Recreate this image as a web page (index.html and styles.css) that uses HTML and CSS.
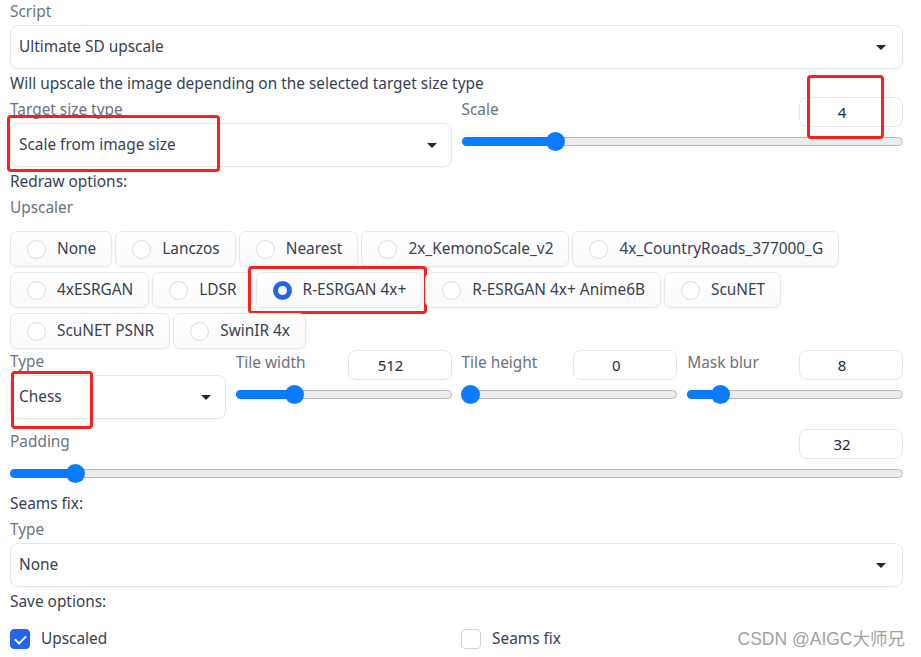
FILE: index.html
```html
<!DOCTYPE html>
<html lang="en">
<head>
    <meta charset="UTF-8">
    <title>Ultimate SD upscale</title>
    <link rel="stylesheet" href="styles.css">
</head>
<body>
    <div class="panel">
        <div class="label label-first">Script</div>
        <div class="dropdown">
            <span>Ultimate SD upscale</span>
            <span class="caret"></span>
        </div>

        <p class="info">Will upscale the image depending on the selected target size type</p>

        <div class="row row-two">
            <div class="col">
                <div class="label">Target size type</div>
                <div class="dropdown dropdown-tight">
                    <span>Scale from image size</span>
                    <span class="caret"></span>
                </div>
                <span class="mark mark-target"></span>
            </div>
            <div class="col">
                <div class="slider-head">
                    <span class="label">Scale</span>
                    <div class="num">4</div>
                </div>
                <div class="slider">
                    <div class="fill" style="width: 21.3%"></div>
                    <div class="thumb" style="left: 21.3%"></div>
                </div>
                <span class="mark mark-scale"></span>
            </div>
        </div>

        <div class="section">Redraw options:</div>
        <div class="label label-gap">Upscaler</div>

        <div class="radios">
            <label class="radio"><span class="dot"></span>None</label>
            <label class="radio"><span class="dot"></span>Lanczos</label>
            <label class="radio"><span class="dot"></span>Nearest</label>
            <label class="radio"><span class="dot"></span>2x_KemonoScale_v2</label>
            <label class="radio"><span class="dot"></span>4x_CountryRoads_377000_G</label>
            <label class="radio"><span class="dot"></span>4xESRGAN</label>
            <label class="radio"><span class="dot"></span>LDSR</label>
            <label class="radio checked"><span class="dot"></span>R-ESRGAN 4x+<span class="mark mark-radio"></span></label>
            <label class="radio"><span class="dot"></span>R-ESRGAN 4x+ Anime6B</label>
            <label class="radio"><span class="dot"></span>ScuNET</label>
            <label class="radio"><span class="dot"></span>ScuNET PSNR</label>
            <label class="radio"><span class="dot"></span>SwinIR 4x</label>
        </div>

        <div class="row row-four">
            <div class="col">
                <div class="label label-type">Type</div>
                <div class="dropdown dropdown-tight">
                    <span>Chess</span>
                    <span class="caret"></span>
                </div>
                <span class="mark mark-type"></span>
            </div>
            <div class="col">
                <div class="slider-head">
                    <span class="label">Tile width</span>
                    <div class="num">512</div>
                </div>
                <div class="slider">
                    <div class="fill" style="width: 27.1%"></div>
                    <div class="thumb" style="left: 27.1%"></div>
                </div>
            </div>
            <div class="col">
                <div class="slider-head">
                    <span class="label">Tile height</span>
                    <div class="num">0</div>
                </div>
                <div class="slider">
                    <div class="fill" style="width: 4.2%"></div>
                    <div class="thumb" style="left: 4.2%"></div>
                </div>
            </div>
            <div class="col">
                <div class="slider-head">
                    <span class="label">Mask blur</span>
                    <div class="num">8</div>
                </div>
                <div class="slider">
                    <div class="fill" style="width: 15.3%"></div>
                    <div class="thumb" style="left: 15.3%"></div>
                </div>
            </div>
        </div>

        <div class="slider-head slider-head-wide">
            <span class="label">Padding</span>
            <div class="num">32</div>
        </div>
        <div class="slider">
            <div class="fill" style="width: 7.3%"></div>
            <div class="thumb" style="left: 7.3%"></div>
        </div>

        <div class="section section-seams">Seams fix:</div>
        <div class="label label-gap">Type</div>
        <div class="dropdown">
            <span>None</span>
            <span class="caret"></span>
        </div>

        <div class="section">Save options:</div>
        <div class="checks">
            <label class="check checked"><span class="box"></span>Upscaled</label>
            <label class="check"><span class="box"></span>Seams fix</label>
        </div>
    </div>
    <span class="watermark">CSDN @AIGC大师兄</span>
</body>
</html>
```

FILE: styles.css
```css
* {
    margin: 0;
    padding: 0;
    box-sizing: border-box;
}

body {
    font-family: "Noto Sans", Lato, sans-serif;
    font-size: 15.4px;
    line-height: 20px;
    color: #374151;
    background: #fff;
    width: 921px;
    height: 657px;
    overflow: hidden;
    position: relative;
}

.panel {
    padding: 0 18px 0 10px;
}

/* 라벨 / 텍스트 */
.label {
    color: #6b7280;
}

.label-first {
    margin-top: 1px;
    padding-top: 1px;
}

.label-gap {
    margin-top: 6px;
}

.info {
    margin-top: 5px;
}

.section {
    margin-top: 5px;
}

.section-seams {
    margin-top: 16px;
}

/* 드롭다운 */
.dropdown {
    margin-top: 3px;
    height: 44px;
    border: 1px solid #e5e7eb;
    border-radius: 8px;
    display: flex;
    align-items: center;
    justify-content: space-between;
    padding: 0 16px 0 8px;
    box-shadow: 0 1px 2px rgba(0,0,0,0.04);
}

.caret {
    width: 0;
    height: 0;
    border-left: 5px solid transparent;
    border-right: 5px solid transparent;
    border-top: 5px solid #1f2937;
}

.dropdown-tight {
    padding-right: 14px;
}

/* 행 */
.row {
    display: grid;
    gap: 10px;
}

.row-two {
    grid-template-columns: 1fr 1fr;
    margin-top: 3px;
}

.row-four {
    grid-template-columns: repeat(4, 1fr);
    margin-top: 1px;
}

.col {
    position: relative;
}

.row-two .col .label:first-child {
    margin-top: 3px;
}

.label-type {
    margin-top: 2px;
}

/* 슬라이더 */
.slider-head {
    display: flex;
    justify-content: space-between;
    align-items: flex-start;
    height: 30px;
}

.slider-head .label {
    margin-top: 3px;
}

.slider-head-wide {
    margin-top: 10px;
}

.num {
    width: 104px;
    height: 30px;
    border: 1px solid #e5e7eb;
    border-radius: 8px;
    padding-right: 18px;
    text-align: center;
    line-height: 28px;
    font-size: 15px;
    color: #1f2937;
}

.slider {
    position: relative;
    margin: 10px 0 0 0;
    height: 9px;
    background: #ececec;
    border: 1px solid #b8b8b8;
    border-radius: 5px;
}

.fill {
    position: absolute;
    left: -1px;
    top: -1px;
    bottom: -1px;
    background: #0a7bff;
    border-radius: 5px;
}

.thumb {
    position: absolute;
    top: 50%;
    width: 19px;
    height: 19px;
    margin: -10px 0 0 -10px;
    background: #0a7bff;
    border-radius: 50%;
}

/* 라디오 */
.radios {
    margin-top: 13px;
    display: flex;
    flex-wrap: wrap;
    gap: 5px 3px;
}

.radio {
    position: relative;
    display: flex;
    align-items: center;
    height: 36px;
    padding: 0 15px 0 16px;
    border: 1px solid #e5e7eb;
    border-radius: 7px;
    background: linear-gradient(#ffffff, #fafafa);
    box-shadow: 0 1px 2px rgba(0,0,0,0.05);
    color: #374151;
}

.dot {
    width: 19px;
    height: 19px;
    border: 1px solid #d8dbe0;
    border-radius: 50%;
    background: #fff;
    margin-right: 11px;
}

.radio.checked .dot {
    border: 5px solid #2463eb;
    background: #fff;
}

/* 체크박스 */
.checks {
    margin-top: 17px;
    display: flex;
    align-items: center;
    height: 20px;
}

.check {
    display: flex;
    align-items: center;
    width: 451px;
    flex-shrink: 0;
}

.box {
    width: 20px;
    height: 20px;
    border: 1px solid #d1d5db;
    border-radius: 4px;
    margin-right: 11px;
    background: #fff;
}

.check.checked .box {
    background: #2563eb;
    border-color: #2563eb;
    position: relative;
}

.check.checked .box::after {
    content: "";
    position: absolute;
    left: 6px;
    top: 3px;
    width: 5px;
    height: 9px;
    border: solid #fff;
    border-width: 0 2.5px 2.5px 0;
    transform: rotate(45deg);
}

/* 워터마크 */
.watermark {
    position: absolute;
    right: 16px;
    bottom: 8px;
    white-space: nowrap;
    color: #a3a3a3;
    font-family: "Liberation Sans", "Noto Sans CJK SC", sans-serif;
    font-size: 17.5px;
}

/* 빨간 표시 박스 */
.mark {
    position: absolute;
    border: 3px solid #f5221e;
    border-radius: 4px;
    pointer-events: none;
}

.mark-target {
    left: -3px;
    top: 18px;
    width: 213px;
    height: 57px;
}

.mark-scale {
    left: 345px;
    top: -22px;
    width: 77px;
    height: 64px;
}

.mark-radio {
    left: -9px;
    top: -7px;
    width: 179px;
    height: 48px;
}

.mark-type {
    left: 1px;
    top: 21px;
    width: 82px;
    height: 58px;
}
```
